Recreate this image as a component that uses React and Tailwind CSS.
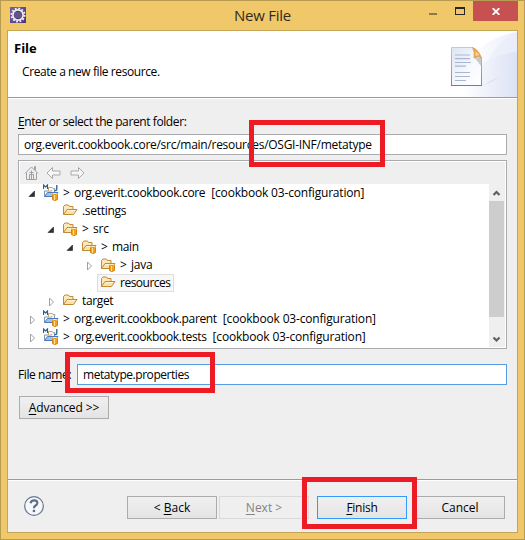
import React from 'react';

function Eclipse() {
  return (
    <svg className="h-4 w-4" viewBox="0 0 16 16">
      <defs>
        <linearGradient id="ecl" x1="0" y1="0" x2="1" y2="1">
          <stop offset="0" stopColor="#75619f" />
          <stop offset="1" stopColor="#4a3477" />
        </linearGradient>
      </defs>
      <rect width="16" height="16" fill="url(#ecl)" />
      <circle cx="8" cy="8" r="6.6" fill="none" stroke="#f2f0f4" strokeWidth="1.8" strokeDasharray="1.9 1.556" />
      <circle cx="8" cy="8" r="5.1" fill="#4b3b78" stroke="#f0eef3" strokeWidth="1.7" />
      <path d="M4.2 6h7.6M3.8 8h8.4M4.2 10h7.6" stroke="#7e74a5" strokeWidth=".9" />
    </svg>
  );
}

function Banner() {
  return (
    <svg className="h-[66px] w-[75px]" viewBox="442 31 75 66">
      <defs>
        <linearGradient id="outer" gradientUnits="userSpaceOnUse" x1="470" y1="0" x2="517" y2="0">
          <stop offset="0" stopColor="#fff" />
          <stop offset="1" stopColor="#eaeefa" />
        </linearGradient>
        <linearGradient id="inner" gradientUnits="userSpaceOnUse" x1="462" y1="0" x2="517" y2="0">
          <stop offset="0" stopColor="#fff" />
          <stop offset="1" stopColor="#dce2f5" />
        </linearGradient>
        <linearGradient id="shade" x1="0" y1="0" x2="1" y2="0">
          <stop offset="0" stopColor="#b2a6bb" />
          <stop offset="1" stopColor="#dfe4f6" stopOpacity="0" />
        </linearGradient>
        <linearGradient id="sheet" x1="0" y1="0" x2="1" y2="1">
          <stop offset="0" stopColor="#dce5f3" />
          <stop offset=".6" stopColor="#f8fafd" />
          <stop offset="1" stopColor="#fff" />
        </linearGradient>
        <linearGradient id="edge" x1="0" y1="0" x2="0" y2="1">
          <stop offset="0" stopColor="#d8c6ad" />
          <stop offset="1" stopColor="#6f8d92" />
        </linearGradient>
      </defs>
      <path d="M447 97Q472 38 517 32V97z" fill="url(#outer)" />
      <path d="M484 75Q490 44 517 32V97z" fill="#e6ebf8" opacity=".45" />
      <path d="M442 97Q478 56 517 52V97z" fill="url(#inner)" />
      <path d="M482 86L505 73Q498 79 486 84z" fill="url(#shade)" />
      <path d="M451.5 47.5H473L481.5 58V85.500H451.500z" fill="url(#sheet)" stroke="url(#edge)" />
      <path d="M451 85.500H482" stroke="#668783" />
      <path d="M474 57l7 1v8z" fill="#a6aab1" opacity=".6" />
      <path d="M472.500 47.500Q479 50 481.500 58Q478 55.500 474 58Q475 52 472.500 47.500z" fill="#efa444" stroke="#cc9653" strokeWidth=".6" />
      <path d="M475.500 51l4 4-4 1z" fill="#ffd297" />
      <g stroke="#a9b7d2" strokeWidth="1.2">
        <path d="M455 55h15M455 58.700h15M455 62.500h16M455 66.200h11M455 72.500h15M455 76.500h15M455 80.500h11" />
      </g>
    </svg>
  );
}

function FolderShapes() {
  return (
    <>
      <path d="M1.500 11.500V3.500L3 2h3.500l1 1.500h3.500V7" fill="#fbe9bd" stroke="#c18a35" />
      <path d="M1.500 11.500L5 6.500h10l-3.500 5z" fill="#fbe3a6" stroke="#c18a35" />
      <path d="M5.500 7.500h7.500" stroke="#fff5d8" />
    </>
  );
}

function Cylinder() {
  return (
    <>
      <path d="M9.500 6.500h5V12q-2.500 2-5 0z" fill="#f3a21e" stroke="#d8820e" />
      <path d="M11.500 7.500v5" stroke="#ffe0a1" />
      <path d="M9.500 6.500q2.500-1 5 0" stroke="#fff0c9" fill="none" />
    </>
  );
}

function Folder({ tagged }) {
  return (
    <svg className="h-4 w-4 shrink-0" viewBox="0 0 16 16">
      <FolderShapes />
      {tagged && <g transform="translate(0 1.500)"><Cylinder /></g>}
    </svg>
  );
}

function Project({ java }) {
  return (
    <svg className="h-[18px] w-4 shrink-0" viewBox="0 0 16 18">
      <path d="M1.500 12.500V7h7l1-2.500h2V10" fill="#f7f9fe" stroke="#8299b5" />
      <path d="M5.500 7V3.500h4l1 1.500h2" fill="#fff" stroke="#c8a560" />
      <path d="M1.500 12.500L4.500 8.500H15l-3 4z" fill="#9fc2ef" stroke="#4a7abd" />
      <path d="M.5 5V1l2 2 2-2v4" fill="none" stroke="#245f8e" strokeWidth="1.200" />
      {java && <path d="M13.800 1v4q0 2-2.500 1.500" fill="none" stroke="#2f689b" strokeWidth="1.400" />}
      <g transform="translate(0 3.500)"><Cylinder /></g>
    </svg>
  );
}

function Arrow({ state }) {
  return (
    <svg className="h-[18px] w-[18px] shrink-0" viewBox="0 0 18 18">
      {state === 'open' && <path d="M10.500 7v5.500H5z" fill="#303030" stroke="#202020" strokeWidth=".6" />}
      {state === 'closed' && <path d="M6.500 6v8l4-4z" fill="#fff" stroke="#a0a0a0" />}
    </svg>
  );
}

const branch = '[cookbook 03-configuration]';

const rows = [
  { pad: 'pl-[4px]', state: 'open', icon: 'java', dirty: true, text: 'org.everit.cookbook.core', branch, track: 'tracking-[-0.32px]' },
  { pad: 'pl-[23px]', icon: 'folder', text: '.settings', track: 'tracking-[-0.3px]' },
  { pad: 'pl-[23px]', state: 'open', icon: 'tagged', dirty: true, text: 'src', track: 'tracking-[-0.2px]' },
  { pad: 'pl-[42px]', state: 'open', icon: 'tagged', dirty: true, text: 'main', track: 'tracking-[-0.35px]' },
  { pad: 'pl-[61px]', state: 'closed', icon: 'tagged', dirty: true, text: 'java', track: 'tracking-[-0.2px]' },
  { pad: 'pl-[61px]', icon: 'folder', text: 'resources', selected: true, track: 'tracking-[-0.5px]' },
  { pad: 'pl-[23px]', state: 'closed', icon: 'folder', text: 'target', track: 'tracking-[-0.35px]' },
  { pad: 'pl-[4px]', state: 'closed', icon: 'project', dirty: true, text: 'org.everit.cookbook.parent', branch, track: 'tracking-[-0.34px]' },
  { pad: 'pl-[4px]', state: 'closed', icon: 'java', dirty: true, text: 'org.everit.cookbook.tests', branch, track: 'tracking-[-0.34px]' },
];

function Row({ row }) {
  const project = row.icon === 'java' || row.icon === 'project';
  return (
    <div className={`flex h-[18px] items-center ${row.pad}`}>
      <Arrow state={row.state} />
      <div className={`-ml-[2px] flex h-[18px] items-center pr-[3px] ${row.selected ? 'bg-[#f7f7f7] outline -outline-offset-1 outline-[#dedede]' : ''}`}>
        <span className="flex w-[23px] shrink-0 pl-[3px]">
          {project ? <Project java={row.icon === 'java'} /> : <Folder tagged={row.icon === 'tagged'} />}
        </span>
        {row.dirty && <span className="w-[11px]">&gt;</span>}
        <span className={row.track}>{row.text}</span>
        {row.branch && <span className="ml-[6px] tracking-[-0.18px]">{row.branch}</span>}
      </div>
    </div>
  );
}

function Toolbar() {
  return (
    <div className="flex h-[22px] items-center gap-[7px] bg-[#efefef] pl-[4px]">
      <svg className="h-4 w-4" viewBox="0 0 16 16" fill="none" stroke="#a0a0a0">
        <path d="M1 8.500L7.500 2l6.500 6.500M2.500 7.500v7h10v-7M11.500 5.500v-4h-1v3M5.500 14.500v-5h4v5M5.500 7.500h4M7.500 5.500v9" />
      </svg>
      <svg className="-ml-px h-4 w-4" viewBox="0 0 16 16" fill="#f7f7f7" stroke="#a9a9a9">
        <path d="M1 8l5.500-5.500v3.500h7.500v4H6.500v3.500z" />
      </svg>
      <svg className="h-4 w-4" viewBox="0 0 16 16" fill="#f7f7f7" stroke="#a9a9a9">
        <path d="M15 8L9.500 2.500V6H2v4h7.500v3.500z" />
      </svg>
    </div>
  );
}

function Button({ children, className = '' }) {
  return (
    <button className={`flex h-[23px] w-[90px] items-center justify-center border bg-linear-to-b from-[#f0f0f0] to-[#e4e4e4] ${className}`}>
      <span>{children}</span>
    </button>
  );
}

function U({ children }) {
  return <span className="underline decoration-1 underline-offset-2">{children}</span>;
}

export default function App() {
  return (
    <div className="relative h-[540px] w-[525px] overflow-hidden border border-[#b69b51] bg-[#f0c869] font-['Open_Sans',sans-serif] text-[12px] leading-[18px] whitespace-nowrap text-black">
      <header className="flex h-[29px] items-start">
        <div className="w-[30px] pt-[6px] pl-[9px]"><Eclipse /></div>
        <h1 className="w-[389px] pt-[3px] pl-[203px] text-[15px] leading-[22px] tracking-[-0.25px] text-[#302b20]">New File</h1>
        <div className="flex h-5 grow items-center">
          <span className="mt-[6px] ml-[9px] h-[2px] w-2 bg-[#8d7846]" />
          <span className="ml-[18px] h-2 w-[10px] border border-t-2 border-[#262626]" />
          <span className="ml-2 flex h-5 w-[45px] items-center justify-center bg-[#c75050]">
            <svg className="h-[7px] w-2" viewBox="0 0 8 7"><path d="M.7.2l6.600 6.600M7.300.2L.7 6.800" stroke="#fff" strokeWidth="1.900" /></svg>
          </span>
        </div>
      </header>

      <main className="mx-[6px] flex h-[503px] flex-col border border-[#c4a456] bg-[#efefef]">
        <section className="flex h-[68px] justify-between border-b border-white bg-white">
          <div className="flex h-[67px] grow justify-between border-b border-[#9b9b9b]">
            <div className="pt-[7px] pl-[6px]">
              <h2 className="text-[13px] leading-[20px] font-bold">File</h2>
              <p className="pt-[5px] pl-2 tracking-[-0.41px]">Create a new file resource.</p>
            </div>
            <Banner />
          </div>
        </section>

        <section className="flex h-[380px] flex-col pr-[10px] pl-[10px]">
          <label className="pt-[14px] tracking-[-0.4px]"><U>E</U>nter or select the parent folder:</label>
          <div className="mt-[3px] flex h-[21px] shrink-0 items-center border border-[#ababaf] bg-white pl-[5px] tracking-[-0.27px]">org.everit.cookbook.core/src/main/resources/OSGI-INF/metatype</div>
          <div className="mt-[5px] h-[189px] shrink-0 border border-[#ababaf] bg-white p-px">
            <Toolbar />
            <div className="flex h-[163px] justify-between">
              <div>{rows.map((row) => <Row key={row.text} row={row} />)}</div>
              <div className="flex w-4 flex-col items-center bg-[#efefef]">
                <svg className="h-[17px] w-4" viewBox="0 0 16 17"><path d="M4.500 11l3-3 3 3" fill="none" stroke="#606060" strokeWidth="2.200" /></svg>
                <span className="h-[116px] w-[15px] self-start bg-[#cdcdcd]" />
                <svg className="h-[30px] w-4" viewBox="0 0 16 30"><path d="M4.500 20.500l3 3 3-3" fill="none" stroke="#606060" strokeWidth="2.200" /></svg>
              </div>
            </div>
          </div>
          <div className="mt-[15px] flex h-[21px] shrink-0 items-center">
            <label className="w-[59px] tracking-[-0.4px]">File na<U>m</U>e:</label>
            <div className="flex h-[21px] grow items-center border border-[#569de5] bg-white pl-[5px] tracking-[-0.45px]">metatype.properties</div>
          </div>
          <Button className="mt-[11px] ml-px shrink-0 border-[#acacac] tracking-[-0.1px]"><U>A</U>dvanced &gt;&gt;</Button>
        </section>

        <footer className="flex grow items-start border-t border-[#9b9b9b]">
          <div className="flex w-full border-t border-white pt-[15px]">
            <svg className="ml-4 h-5 w-5" viewBox="0 0 20 20">
              <circle cx="10" cy="10" r="9.300" fill="#f7f8fa" stroke="#657791" strokeWidth="1.200" />
              <path d="M6.500 7.200q.5-3 3.800-2.900 3.200.2 3 2.900-.2 1.600-2 2.600-1.300.7-1.300 2.500" fill="none" stroke="#5b6d8b" strokeWidth="2.200" />
              <rect x="8.800" y="13.800" width="2.300" height="2.300" fill="#5b6d8b" />
            </svg>
            <Button className="ml-[83px] border-[#acacac]">&lt; <U>B</U>ack</Button>
            <Button className="ml-[2px] border-[#d9d9d9] from-[#efefef] to-[#efefef] text-[#838383]"><U>N</U>ext &gt;</Button>
            <Button className="ml-2 border-[#3399ff] tracking-[-0.25px]"><U>F</U>inish</Button>
            <Button className="ml-2 border-[#acacac]">Cancel</Button>
          </div>
        </footer>
      </main>

      <div className="absolute top-[119px] left-[248px] h-[47px] w-[136px] border-5 border-[#ed1c24]" />
      <div className="absolute top-[351px] left-[64px] h-[41px] w-[150px] border-5 border-[#ed1c24]" />
      <div className="absolute top-[476px] left-[301px] h-[52px] w-[115px] border-5 border-[#ed1c24]" />
    </div>
  );
}
